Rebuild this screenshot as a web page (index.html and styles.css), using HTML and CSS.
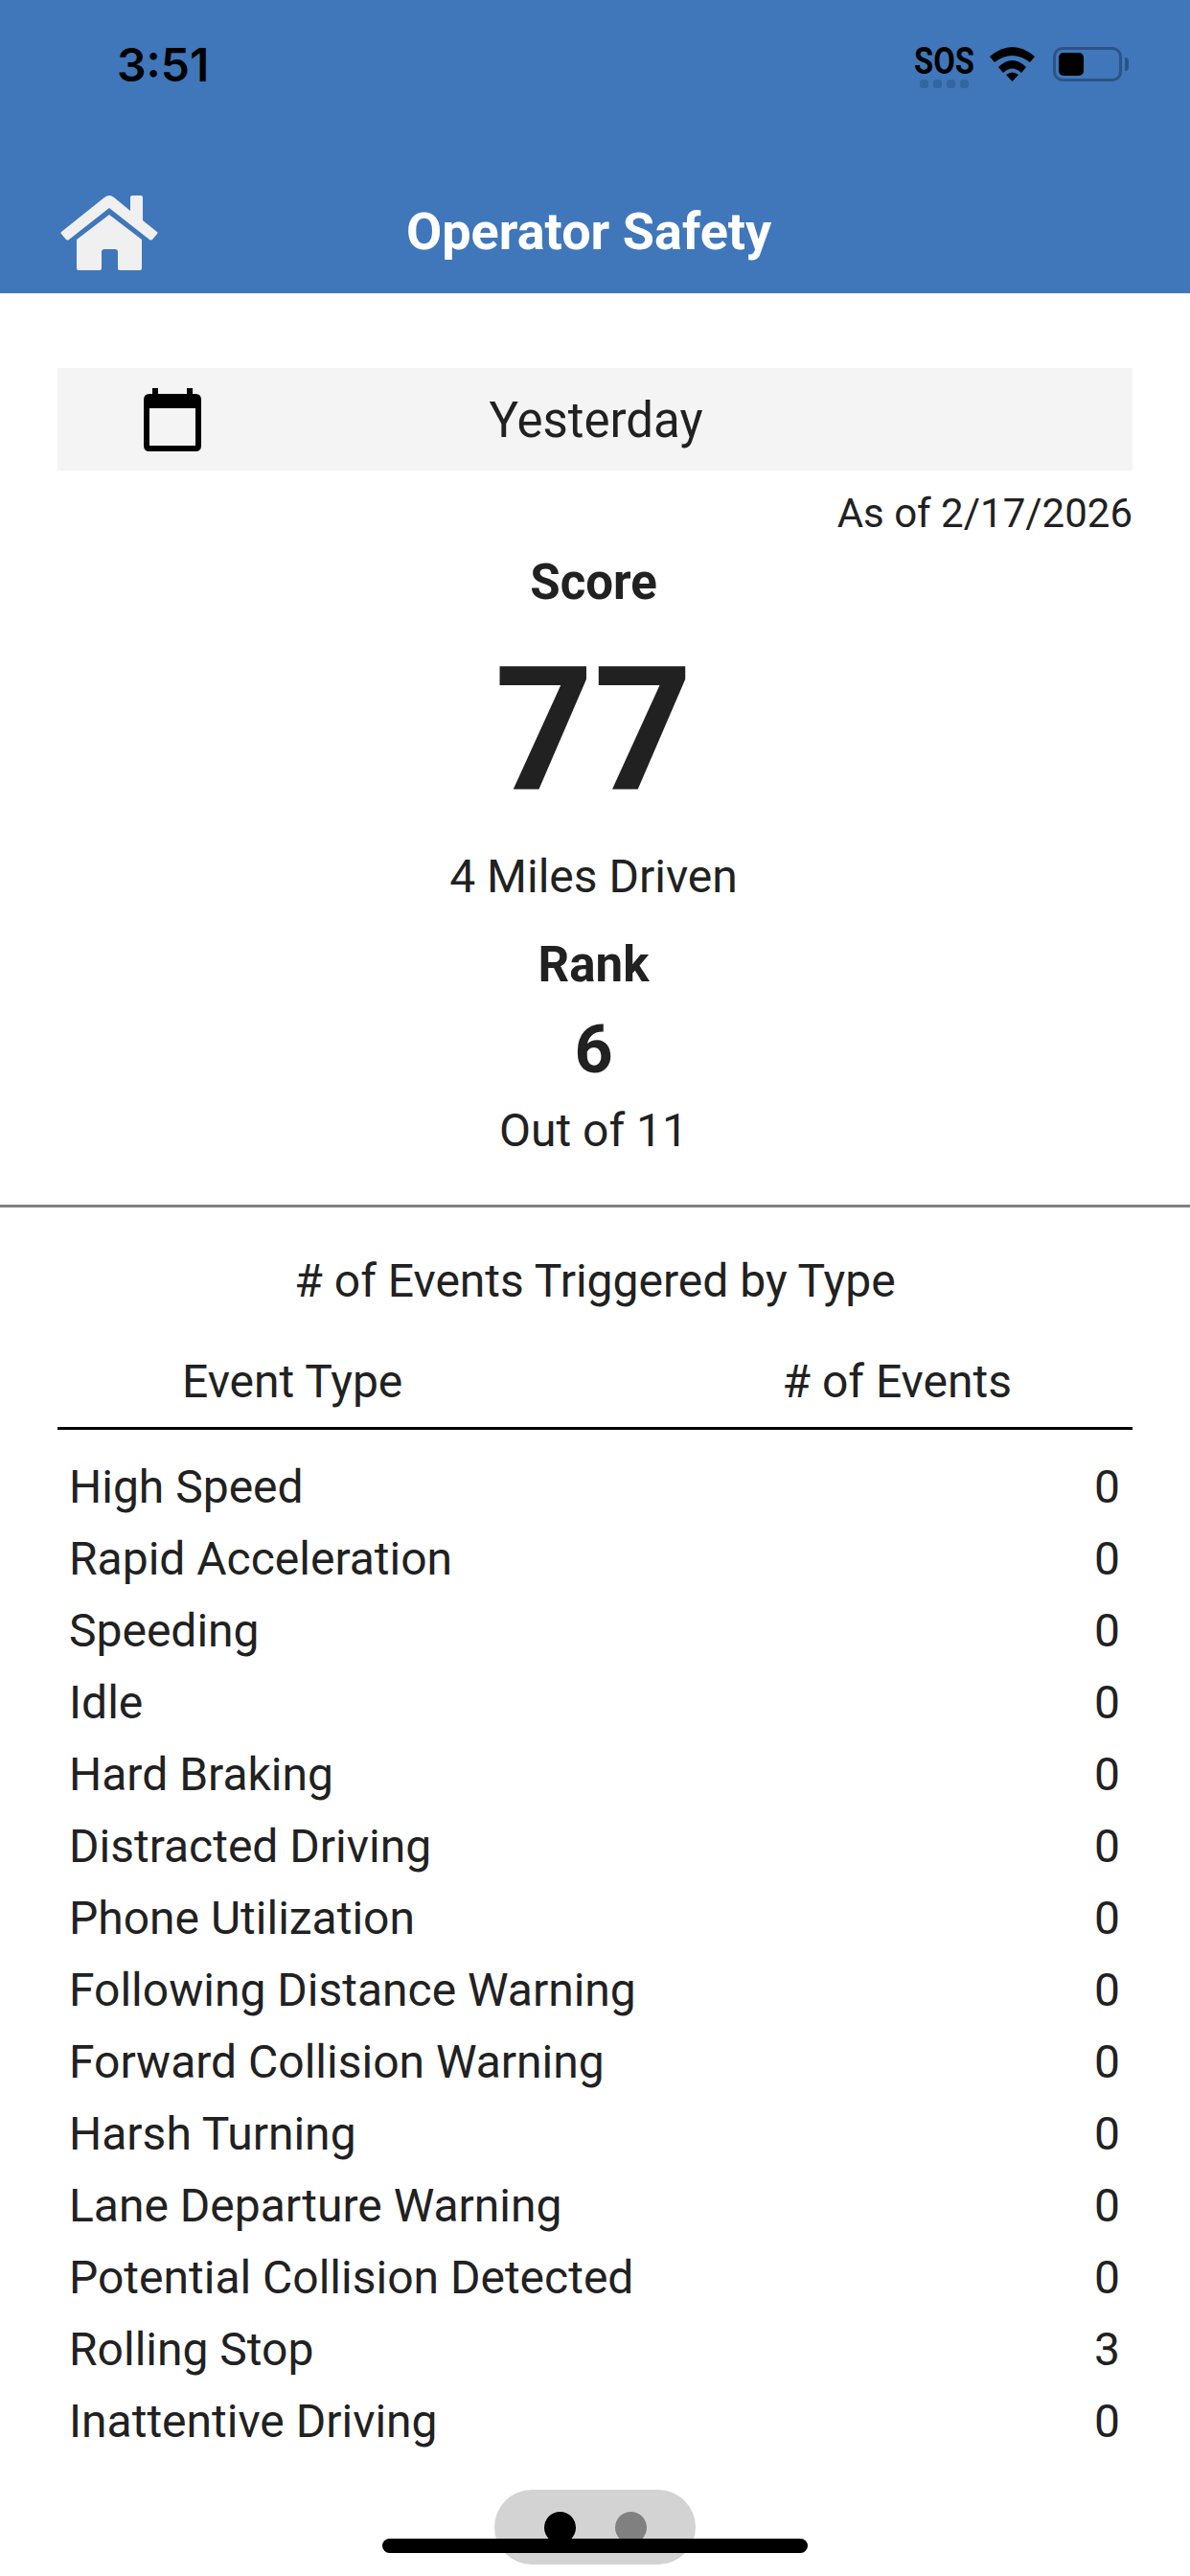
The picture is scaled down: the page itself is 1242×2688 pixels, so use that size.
FILE: index.html
```html
<!DOCTYPE html>
<html lang="en">
<head>
    <meta charset="UTF-8">
    <title>Operator Safety</title>
    <link rel="stylesheet" href="styles.css">
</head>
<body>
    <div class="page">
        <header class="top">
            <div class="status">
                <span class="time">3:51</span>
                <div class="status-icons">
                    <div class="sos">
                        <span class="sos-text">SOS</span>
                        <div class="sos-dots"><i></i><i></i><i></i><i></i></div>
                    </div>
                    <svg class="wifi" viewBox="0 0 47 36" width="47" height="36">
                        <path d="M0 10 Q23.5 -10 47 10 L42 16 Q23.5 2 5 16Z M9 21 Q23.5 7 38 21 L33 27 Q23.5 18 14 27Z M17 29 Q23.5 24 30 29 L23.5 36Z" fill="#000"/>
                    </svg>
                    <div class="battery"><div class="battery-level"></div></div>
                    <div class="battery-tip"></div>
                </div>
            </div>
            <div class="nav">
                <svg class="home" viewBox="0 0 102 80" width="102" height="80">
                    <path d="M1 39 L46 3 Q51 -1 56 3 L73 17 L73 3 Q73 1 75 1 L84 1 Q86 1 86 3 L86 27 L101 39 Q102 40 101 41 L96 47 Q94 48 93 47 L51 14 L9 47 Q8 48 6 47 L1 41 Q0 40 1 39Z M51 21 L85 47 L85 77 Q85 79 83 79 L62 79 Q60 79 60 77 L60 60 Q60 57 57 57 L46 57 Q43 57 43 60 L43 77 Q43 79 41 79 L19 79 Q17 79 17 77 L17 47Z" fill="#f0f0f0"/>
                </svg>
                <h1>Operator Safety</h1>
            </div>
        </header>

        <section class="summary">
            <div class="date-bar">
                <svg class="calendar" viewBox="0 0 60 66" width="60" height="66">
                    <path d="M9 0 H15 V6 H45 V0 H51 V6 H54 Q60 6 60 12 V60 Q60 66 54 66 H6 Q0 66 0 60 V12 Q0 6 6 6 H9Z M6 21 V60 H54 V21Z" fill="#000" fill-rule="evenodd"/>
                </svg>
                <span class="date-label">Yesterday</span>
            </div>
            <p class="as-of">As of 2/17/2026</p>
            <div class="stats">
                <h2 class="stat-title score-title">Score</h2>
                <div class="score">77</div>
                <p class="stat-note miles">4 Miles Driven</p>
                <h2 class="stat-title rank-title">Rank</h2>
                <div class="rank">6</div>
                <p class="stat-note out-of">Out of 11</p>
            </div>
        </section>

        <section class="events">
            <p class="events-title"># of Events Triggered by Type</p>
            <div class="events-head">
                <span class="head-type">Event Type</span>
                <span class="head-count"># of Events</span>
            </div>
            <ul class="event-list">
                <li><span>High Speed</span><span>0</span></li>
                <li><span>Rapid Acceleration</span><span>0</span></li>
                <li><span>Speeding</span><span>0</span></li>
                <li><span>Idle</span><span>0</span></li>
                <li><span>Hard Braking</span><span>0</span></li>
                <li><span>Distracted Driving</span><span>0</span></li>
                <li><span>Phone Utilization</span><span>0</span></li>
                <li><span>Following Distance Warning</span><span>0</span></li>
                <li><span>Forward Collision Warning</span><span>0</span></li>
                <li><span>Harsh Turning</span><span>0</span></li>
                <li><span>Lane Departure Warning</span><span>0</span></li>
                <li><span>Potential Collision Detected</span><span>0</span></li>
                <li><span>Rolling Stop</span><span>3</span></li>
                <li><span>Inattentive Driving</span><span>0</span></li>
            </ul>
        </section>

        <div class="pager"><i class="dot on"></i><i class="dot"></i></div>
        <div class="home-bar"></div>
    </div>
</body>
</html>
```

FILE: styles.css
```css
* {
    box-sizing: border-box;
}

html, body {
    margin: 0;
    padding: 0;
    background: #fff;
}

.page {
    position: relative;
    width: 1242px;
    height: 2688px;
    overflow: hidden;
    font-family: Roboto, "Liberation Sans", sans-serif;
    font-size: 48px;
    color: #212121;
}

.top {
    height: 306px;
    background: #3f77ba;
}

.status {
    height: 130px;
    display: flex;
    justify-content: space-between;
    padding: 40px 64px 0 122px;
}

.time {
    font-family: Inter, sans-serif;
    font-size: 48px;
    font-weight: 600;
    line-height: 56px;
    color: #000;
}

.status-icons {
    display: flex;
    align-items: flex-start;
    padding-top: 9px;
}

.sos {
    width: 60px;
    margin-right: 18px;
    display: flex;
    flex-direction: column;
    align-items: center;
}

.sos-text {
    font-family: Roboto, sans-serif;
    font-weight: 700;
    font-size: 39px;
    line-height: 30px;
    color: #000;
    transform: scaleX(0.84);
}

.sos-dots {
    display: flex;
    gap: 5px;
    margin-top: 4px;
}

.sos-dots i {
    width: 9px;
    height: 9px;
    border-radius: 3px;
    background: #35659e;
}

.wifi {
    margin-right: 19px;
}

.battery {
    width: 72px;
    height: 36px;
    border: 3px solid #2b5485;
    border-radius: 10px;
    padding: 3px;
}

.battery-level {
    width: 26px;
    height: 24px;
    border-radius: 5px;
    background: #000;
}

.battery-tip {
    width: 4px;
    height: 14px;
    margin: 11px 0 0 3px;
    border-radius: 0 4px 4px 0;
    background: #2b5485;
}

.nav {
    height: 176px;
    display: flex;
    align-items: flex-start;
    padding-left: 63px;
}

.home {
    margin-top: 73px;
}

.nav h1 {
    margin: 0 0 0 259px;
    padding-top: 77px;
    font-size: 54px;
    line-height: 70px;
    font-weight: 700;
    color: #fff;
}

.summary {
    height: 954px;
    padding: 78px 60px 0;
    border-bottom: 3px solid #808080;
    text-align: center;
}

.date-bar {
    position: relative;
    height: 107px;
    background: #f4f4f4;
    display: flex;
    align-items: center;
    justify-content: center;
    padding-top: 2px;
}

.calendar {
    position: absolute;
    left: 90px;
    top: 21px;
}

.date-label {
    font-size: 51px;
    color: #212121;
    margin-left: 2px;
}

.as-of {
    margin: 20px 0 0;
    font-size: 42px;
    line-height: 50px;
    text-align: right;
}

.stats {
    padding-right: 3px;
}

.stat-title {
    margin: 0;
    font-size: 51px;
    line-height: 56px;
    font-weight: 700;
}

.score-title {
    margin-top: 19px;
}

.score {
    font-size: 180px;
    line-height: 190px;
    font-weight: 700;
    margin-top: 31px;
}

.stat-note {
    margin: 0;
    font-size: 48px;
    line-height: 56px;
}

.miles {
    margin-top: 30px;
}

.rank-title {
    margin-top: 36px;
}

.rank {
    font-size: 70px;
    line-height: 80px;
    font-weight: 700;
    margin-top: 20px;
}

.out-of {
    margin-top: 17px;
}

.events {
    padding: 49px 60px 0;
}

.events-title {
    margin: 0;
    font-size: 48px;
    line-height: 56px;
    text-align: center;
}

.events-head {
    display: flex;
    height: 98px;
    padding-top: 20px;
    margin-top: 29px;
    font-size: 48px;
    line-height: 56px;
    border-bottom: 3px solid #000;
}

.head-type {
    margin-left: 130px;
}

.head-count {
    margin-left: auto;
    margin-right: 126px;
}

.event-list {
    list-style: none;
    margin: 22px 0 0;
    padding: 0 13px 0 12px;
}

.event-list li {
    display: flex;
    justify-content: space-between;
    height: 75px;
    line-height: 75px;
    font-size: 48px;
}

.pager {
    position: absolute;
    left: 516px;
    top: 2598px;
    width: 210px;
    height: 78px;
    border-radius: 39px;
    background: #d3d3d3;
    display: flex;
    align-items: center;
    justify-content: center;
    gap: 41px;
}

.dot {
    width: 33px;
    height: 33px;
    border-radius: 50%;
    background: #808080;
}

.dot.on {
    background: #000;
}

.home-bar {
    position: absolute;
    left: 399px;
    top: 2649px;
    width: 444px;
    height: 15px;
    border-radius: 8px;
    background: #000;
}
```
